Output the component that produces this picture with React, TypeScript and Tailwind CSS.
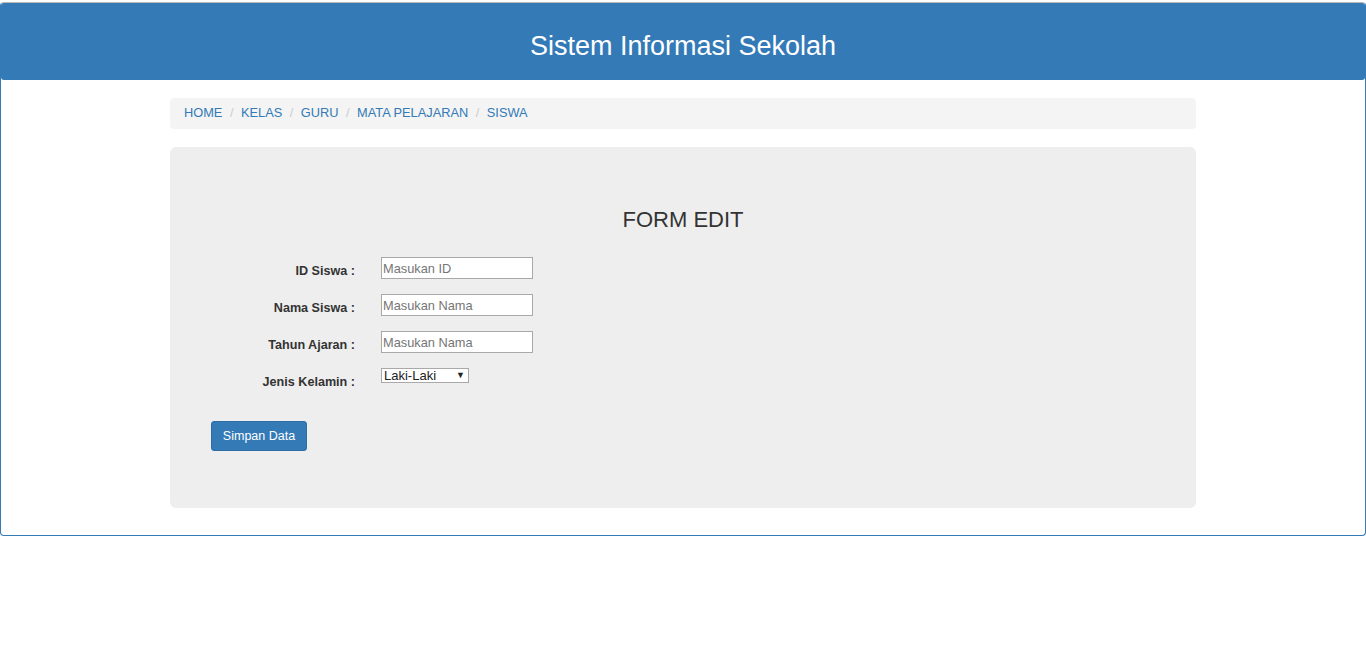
import React from "react";

const crumbs = ["HOME", "KELAS", "GURU", "MATA PELAJARAN", "SISWA"];

function Row({ label, children }: { label: string; children: React.ReactNode }) {
  return (
    <div className="flex items-start h-[22px]">
      <label className="w-[144px] text-right font-bold text-[12.6px] leading-[20px] pt-[4px] text-[#333]">
        {label}
      </label>
      <div className="ml-[26px]">{children}</div>
    </div>
  );
}

const inputCls =
  "block w-[152px] h-[22px] border border-[#a9a9a9] bg-white px-[1px] text-[12.8px] placeholder:text-[#757575] outline-none";

export default function App() {
  return (
    <div className="bg-white min-h-[656px] font-['Liberation_Sans',Arial,sans-serif] text-[#333]">
      <div className="pt-[2px]">
        <div className="border border-[#337ab7] border-t-[#b9b9b9] rounded-[4px] overflow-hidden h-[534px]">
          {/* heading */}
          <div className="bg-[#337ab7] h-[77px] flex items-center justify-center rounded-b-[3px]">
            <h1 className="text-white text-[27px] leading-none pt-[10px]">Sistem Informasi Sekolah</h1>
          </div>

          <div className="w-[1026px] mx-auto pt-[18px]">
            {/* breadcrumb */}
            <div className="bg-[#f4f4f4] rounded-[4px] h-[31px] px-[14px] pb-[1px] flex items-center text-[12.8px]">
              {crumbs.map((c, i) => (
                <React.Fragment key={c}>
                  {i > 0 && <span className="px-[7.5px] text-[#ccc]">/</span>}
                  <a className="text-[#337ab7]">{c}</a>
                </React.Fragment>
              ))}
            </div>

            {/* jumbotron */}
            <div className="mt-[18px] bg-[#eeeeee] rounded-[6px] h-[361px] pt-[61px] px-[41px]">
              <h3 className="text-center text-[22px] leading-[24px] text-[#333]">FORM EDIT</h3>
              <div className="mt-[25px] flex flex-col gap-[15px]">
                <Row label="ID Siswa :">
                  <input placeholder="Masukan ID" className={inputCls} />
                </Row>
                <Row label="Nama Siswa :">
                  <input placeholder="Masukan Nama" className={inputCls} />
                </Row>
                <Row label="Tahun Ajaran :">
                  <input placeholder="Masukan Nama" className={inputCls} />
                </Row>
                <Row label="Jenis Kelamin :">
                  <div className="relative w-[88px] h-[15px]">
                    <select className="block appearance-none w-[88px] h-[15px] border border-[#a9a9a9] bg-white pl-[2px] py-0 text-[13px] leading-[13px] text-[#222] outline-none">
                      <option>Laki-Laki</option>
                      <option>Perempuan</option>
                    </select>
                    <span className="absolute right-[4px] top-0 h-[15px] flex items-center text-[9px] text-[#222] pointer-events-none">
                      ▼
                    </span>
                  </div>
                </Row>
              </div>
              <button className="block mt-[31px] h-[30px] w-[96px] bg-[#337ab7] border border-[#2e6da4] rounded-[3px] text-white text-[12.5px]">
                Simpan Data
              </button>
            </div>
          </div>
        </div>
      </div>
    </div>
  );
}
